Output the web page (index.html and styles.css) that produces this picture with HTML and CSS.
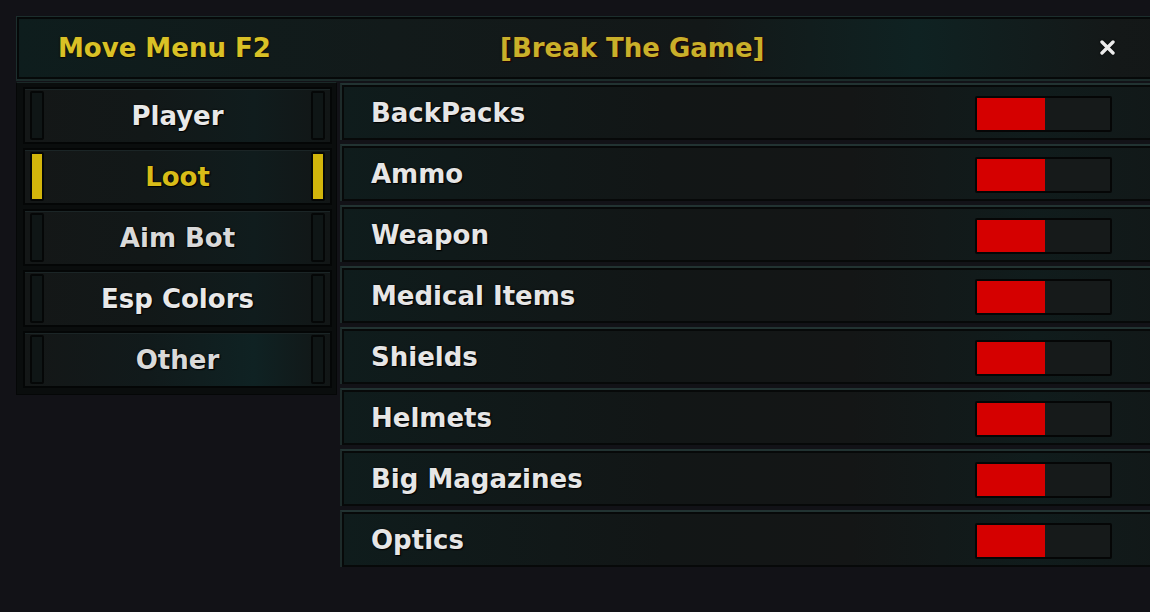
FILE: index.html
```html
<!DOCTYPE html>
<html>
<head>
<meta charset="utf-8">
<link rel="stylesheet" href="styles.css">
</head>
<body>
<div class="window">
  <div class="header">
    <div class="title-left">Move Menu F2</div>
    <div class="title-center">[Break The Game]</div>
    <div class="close"><svg width="15" height="15" viewBox="0 0 15 15"><path d="M2 2 L13 13 M13 2 L2 13" stroke="#ececec" stroke-width="3.4" stroke-linecap="round"/></svg></div>
  </div>
  <div class="main">
    <div class="sidebar">
      <div class="tab"><span class="bar"></span><span class="tab-label bright">Player</span><span class="bar"></span></div>
      <div class="tab active"><span class="bar"></span><span class="tab-label">Loot</span><span class="bar"></span></div>
      <div class="tab"><span class="bar"></span><span class="tab-label">Aim Bot</span><span class="bar"></span></div>
      <div class="tab"><span class="bar"></span><span class="tab-label bright">Esp Colors</span><span class="bar"></span></div>
      <div class="tab"><span class="bar"></span><span class="tab-label">Other</span><span class="bar"></span></div>
    </div>
    <div class="list">
      <div class="row"><span class="row-label">BackPacks</span><span class="toggle"><span class="fill"></span></span></div>
      <div class="row"><span class="row-label">Ammo</span><span class="toggle"><span class="fill"></span></span></div>
      <div class="row"><span class="row-label">Weapon</span><span class="toggle"><span class="fill"></span></span></div>
      <div class="row"><span class="row-label">Medical Items</span><span class="toggle"><span class="fill"></span></span></div>
      <div class="row"><span class="row-label">Shields</span><span class="toggle"><span class="fill"></span></span></div>
      <div class="row"><span class="row-label">Helmets</span><span class="toggle"><span class="fill"></span></span></div>
      <div class="row"><span class="row-label">Big Magazines</span><span class="toggle"><span class="fill"></span></span></div>
      <div class="row"><span class="row-label">Optics</span><span class="toggle"><span class="fill"></span></span></div>
    </div>
  </div>
</div>
</body>
</html>
```

FILE: styles.css
```css
html, body {
  margin: 0;
  padding: 0;
  background: #121217;
  overflow: hidden;
  width: 1150px;
  height: 612px;
}

.window {
  margin: 16px 0 0 16px;
  width: 1250px;
  font-family: "DejaVu Sans", Verdana, sans-serif;
  font-weight: bold;
}

.header {
  height: 62px;
  display: flex;
  align-items: center;
  border-top: 1px solid #1c2e2d;
  border-left: 1px solid #1c2e2d;
  box-shadow: inset 0 0 0 2px #060909;
  background: linear-gradient(90deg, #0e1d1d 0%, #121a1a 30%, #131818 55%, #0f2222 72%, #141818 88%, #121616 100%);
  border-bottom: 2px solid #1b2b2a;
}

.title-left {
  box-sizing: border-box;
  padding-left: 41px;
  width: 483px;
  flex: none;
  font-size: 26px;
  color: #d9c126;
  white-space: nowrap;
  text-shadow: 0 0 2px #2a1a00, 0 1px 1px #000;
}

.title-center {
  width: 262px;
  flex: none;
  white-space: nowrap;
  font-size: 26px;
  color: #c9b02a;
  text-shadow: 0 0 2px #3a0a0a, 1px 1px 1px #200;
}

.close {
  margin-left: 338px;
  display: flex;
  margin-top: -2px;
  filter: drop-shadow(0 0 1px #000);
}

.main {
  display: flex;
  gap: 3px;
  align-items: flex-start;
  margin-top: 1px;
}

.sidebar {
  flex: 0 0 321px;
  box-sizing: border-box;
  padding: 4px 4px 6px 6px;
  display: flex;
  flex-direction: column;
  gap: 4px;
  background: #0a0d0d;
  border: 1px solid #050707;
  border-top: 1px solid #1a2827;
}

.tab {
  height: 57px;
  box-sizing: border-box;
  display: flex;
  align-items: center;
  justify-content: space-between;
  padding: 0 5px;
  border: 2px solid #040606;
  box-shadow: inset 0 1px 0 #1b2526;
  background: linear-gradient(90deg, #141717 0%, #121818 40%, #101c1d 75%, #121616 100%);
}

.tab:nth-child(5) {
  background: linear-gradient(90deg, #141717 0%, #111a1b 40%, #0f2223 75%, #121616 100%);
}

.bar {
  width: 10px;
  height: 45px;
  border: 2px solid #050707;
  border-radius: 2px;
  background: #0f1616;
}

.tab-label {
  font-size: 26px;
  color: #d9d9d9;
  text-shadow: 0 0 2px #000, 1px 1px 1px #000;
}

.tab-label.bright {
  color: #e8e8e8;
}

.tab.active .bar {
  background: #d2b50b;
}

.tab.active .tab-label {
  color: #d8bc18;
}

.list {
  flex: 1;
  display: flex;
  flex-direction: column;
  gap: 4px;
  padding-top: 1px;
}

.row {
  height: 57px;
  box-sizing: border-box;
  display: flex;
  align-items: center;
  border-top: 2px solid #223332;
  border-left: 2px solid #1d2b2a;
  box-shadow: inset 0 0 0 2px #070909;
  background: linear-gradient(90deg, #0f1c1c 0%, #121616 35%, #141616 55%, #101c1c 75%, #131515 100%);
}

.row-label {
  flex: 0 0 633px;
  padding-left: 29px;
  box-sizing: border-box;
  font-size: 26px;
  color: #e6e6e6;
  text-shadow: 0 0 2px #000, 1px 1px 1px #000;
}

.toggle {
  width: 137px;
  height: 36px;
  box-sizing: border-box;
  border: 2px solid #050606;
  border-radius: 2px;
  background: #161a1a;
  display: flex;
  margin-top: 2px;
}

.fill {
  width: 68px;
  height: 100%;
  background: #d50000;
}
```
